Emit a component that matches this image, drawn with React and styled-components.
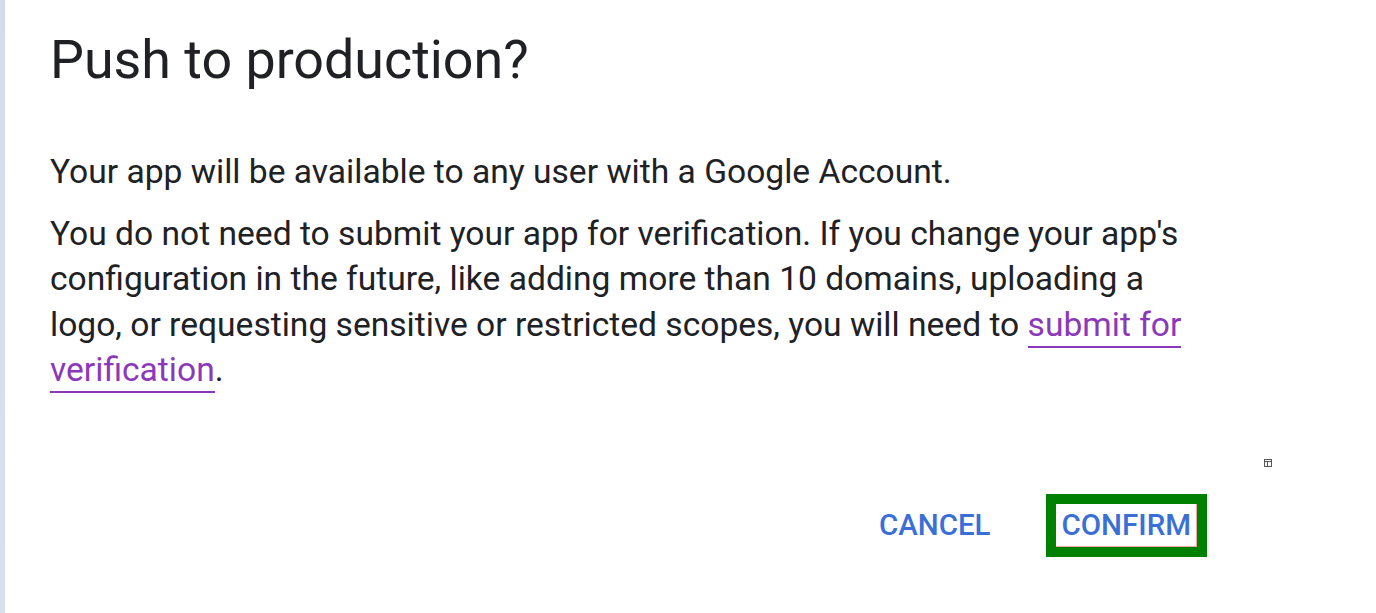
import styled, { createGlobalStyle } from 'styled-components'

const GlobalStyle = createGlobalStyle`
	html, body {
		margin: 0;
		padding: 0;
		background: #ffffff;
	}
	body {
		font-family: Roboto, "Liberation Sans", Arial, sans-serif;
		-webkit-font-smoothing: antialiased;
	}
`

const colors = {
	text: '#202124',
	link: '#8b38ba',
	blue: '#3b6fd8',
	green: '#008000',
	strip: '#d2dcec',
}

export default function App() {
	return (
		<>
			<GlobalStyle />
			<Page>
				<Strip />
				<Dialog>
					<Title>Push to production?</Title>
					<Text>Your app will be available to any user with a Google Account.</Text>
					<Text $gap>
						You do not need to submit your app for verification. If you change your app's
						configuration in the future, like adding more than 10 domains, uploading a logo,
						or requesting sensitive or restricted scopes, you will need to{' '}
						<Link href="#">submit for verification</Link>.
					</Text>
					<Actions>
						<Marker aria-hidden="true">
							<svg width="8" height="8" viewBox="0 0 8 8">
								<rect x="0.5" y="0.5" width="7" height="7" fill="none" stroke="#555" strokeWidth="1" />
								<line x1="0.5" y1="2.5" x2="7.5" y2="2.5" stroke="#555" strokeWidth="1" />
								<line x1="3.5" y1="2.5" x2="3.5" y2="7.5" stroke="#555" strokeWidth="1" />
							</svg>
						</Marker>
						<Button>CANCEL</Button>
						<Button $focused>CONFIRM</Button>
					</Actions>
				</Dialog>
			</Page>
		</>
	)
}

const Page = styled.div`
	display: flex;
	width: 1376px;
	height: 613px;
	overflow: hidden;
	background: #ffffff;
`

const Strip = styled.div`
	width: 5px;
	flex: none;
	background: linear-gradient(${colors.strip}, #d8e1ee);
`

const Dialog = styled.div`
	flex: 1;
	padding: 28px 170px 0 45px;
	color: ${colors.text};
`

const Title = styled.h1`
	margin: 0 0 57px;
	font-size: 53.8px;
	line-height: 64px;
	font-weight: 400;
	letter-spacing: 0;
`

const Text = styled.p`
	margin: ${(p) => (p.$gap ? '16px' : '0')} 0 0;
	font-size: 33.6px;
	line-height: 45.5px;
	font-weight: 400;
	max-width: 1150px;
`

const Link = styled.a`
	color: ${colors.link};
	text-decoration: none;
	border-bottom: 2px solid ${colors.link};
	padding-bottom: 2px;
`

const Actions = styled.div`
	position: relative;
	display: flex;
	justify-content: flex-end;
	align-items: center;
	gap: 59px;
	margin-top: 111px;
	padding-right: 9px;
`

const Marker = styled.span`
	position: absolute;
	right: -66px;
	top: -45px;
	display: block;
	line-height: 0;
`

const Button = styled.button`
	border: none;
	background: #ffffff;
	font-family: Roboto, "Liberation Sans", Arial, sans-serif;
	font-size: 29.5px;
	font-weight: 500;
	line-height: 41px;
	height: 43px;
	padding: 0 6px;
	color: ${colors.blue};
	cursor: pointer;
	outline: ${(p) => (p.$focused ? `10px solid ${colors.green}` : 'none')};
	box-shadow: ${(p) => (p.$focused ? 'inset -1px -1px 0 #f0a4a4' : 'none')};
`
